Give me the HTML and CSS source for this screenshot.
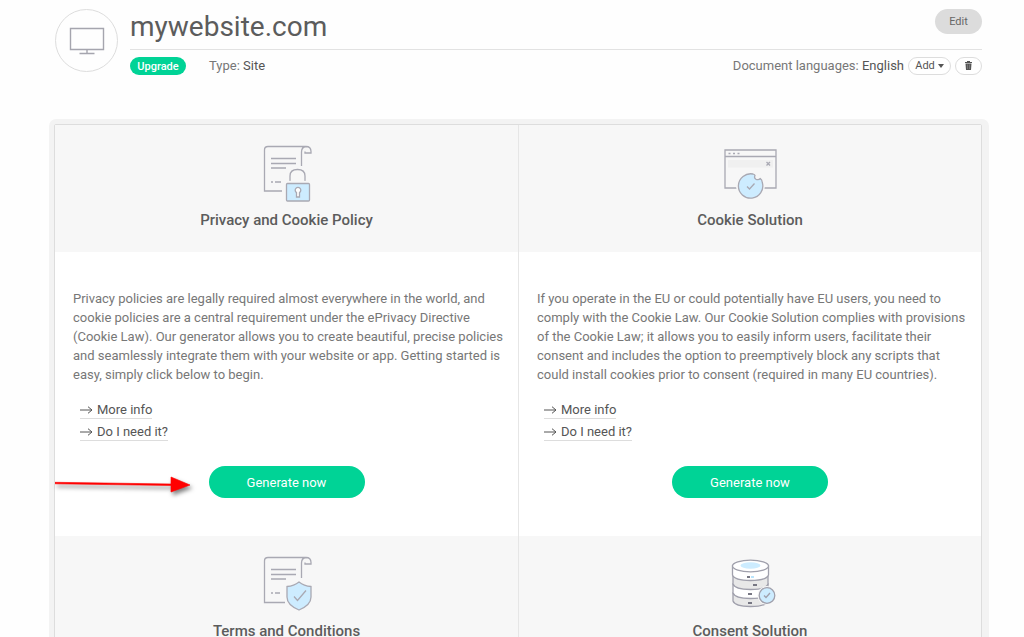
FILE: index.html
```html
<!DOCTYPE html>
<html lang="en">
<head>
<meta charset="utf-8">
<meta name="viewport" content="width=device-width, initial-scale=1">
<title>mywebsite.com</title>
<link rel="stylesheet" href="styles.css">
</head>
<body>
<header class="site-header">
  <div class="site-avatar">
    <svg width="36" height="28" viewBox="0 0 36 28" fill="none" stroke="#a5a5ae" stroke-width="1.4" aria-hidden="true"><path d="M1.5 1.5h33v21h-33zM18 22.500v4M10.500 26.500h15"/></svg>
  </div>
  <div class="site-info">
    <div class="title-row">
      <h1 class="site-title">mywebsite.com</h1>
      <button class="edit-button" type="button">Edit</button>
    </div>
    <div class="meta-row">
      <button class="upgrade-button" type="button">Upgrade</button>
      <span class="meta-type">Type: <span class="meta-value">Site</span></span>
      <div class="languages">
        <span>Document languages: <span class="meta-value">English</span></span>
        <button class="small-button add-button" type="button">Add <span class="caret"></span></button>
        <button class="small-button delete-button" type="button" aria-label="Delete">
          <svg width="7" height="9" viewBox="0 0 7 9" aria-hidden="true"><path fill="#555" d="M0 1h2V0h3v1h2v1H0zM.5 2.600h6L6 9H1z"/><path stroke="#999" stroke-width=".5" d="M2.500 3.500v4.500M4.500 3.500v4.500"/></svg>
        </button>
      </div>
    </div>
  </div>
</header>

<main class="frame">
  <div class="cards">
    <section class="card">
      <div class="card-head">
        <svg class="card-icon" width="60" height="60" viewBox="0 0 60 60" fill="none" stroke="#a9a9b3" stroke-width="1.300" aria-hidden="true">
          <path d="M25 49H7.500V8Q7.500 4.500 11 4.500H49Q54 4.500 54 9.500V11H48V9.500M48 11H50M49 4.500Q44.500 5 44.500 10V24"/>
          <path d="M14 16.500h25M14 21.500h25M14 26h15M14 40h2M18 40h6"/>
          <path d="M33 40V34Q33 27.500 40.500 27.500T48 34v6" stroke="#f7f7f7" stroke-width="4"/>
          <path d="M33 40V34Q33 27.500 40.500 27.500T48 34v6"/>
          <rect x="27.500" y="39.500" width="27" height="21" stroke="#f7f7f7"/>
          <rect x="29.500" y="41.500" width="23" height="17.500" rx="1" fill="#cdecff"/>
          <path fill="#fff" d="M39.500 50.500a2.800 2.800 0 1 1 3 0v4.500h-3z"/>
        </svg>
        <h2 class="card-title">Privacy and Cookie Policy</h2>
      </div>
      <div class="card-body">
        <p class="card-text">Privacy policies are legally required almost everywhere in the world, and<br>cookie policies are a central requirement under the ePrivacy Directive<br>(Cookie Law). Our generator allows you to create beautiful, precise policies<br>and seamlessly integrate them with your website or app. Getting started is<br>easy, simply click below to begin.</p>
        <ul class="card-links">
          <li><a class="card-link" href="#privacy-info"><svg class="link-arrow" width="13" height="8" viewBox="0 0 13 8" aria-hidden="true"><path d="M0 4h12M8 .7 12 4 8 7.300"/></svg>More info</a></li>
          <li><a class="card-link" href="#privacy-need"><svg class="link-arrow" width="13" height="8" viewBox="0 0 13 8" aria-hidden="true"><path d="M0 4h12M8 .7 12 4 8 7.300"/></svg>Do I need it?</a></li>
        </ul>
        <div class="card-action">
          <svg class="pointer-arrow" width="144" height="24" viewBox="0 0 144 24" aria-hidden="true"><path d="M0 8.300 116 10V3L135 11 116 18V11.500L0 9.800z" fill="#f00" stroke="#f00" stroke-width=".6"/></svg>
          <button class="generate-button" type="button">Generate now</button>
        </div>
      </div>
    </section>

    <section class="card">
      <div class="card-head">
        <svg class="card-icon" width="60" height="60" viewBox="0 0 60 60" fill="none" stroke="#a9a9b3" stroke-width="1.300" aria-hidden="true">
          <path d="M5 8h51v38H5zM5 14.500h51"/>
          <path d="M8.500 11.500h2M13 11.500h2M17.500 11.500h2"/>
          <path d="M8 18h45v7.500H8z" fill="#f0f0f0" stroke="none"/>
          <path d="m46.500 20 3.500 3.500m0-3.500-3.500 3.500"/>
          <circle cx="30.500" cy="43.500" r="14.500" fill="#f7f7f7" stroke="none"/>
          <path fill="#cdecff" d="M33 32a12.200 12.200 0 1 0 9.300 8.500q-.3-3-2-4-1.500 1.800-4.300.8-2.200-1.300-1-3.800-.3-1-2-1.500z"/>
          <path d="m27 44.500 2.500 2.500 5-5.500"/>
        </svg>
        <h2 class="card-title">Cookie Solution</h2>
      </div>
      <div class="card-body">
        <p class="card-text">If you operate in the EU or could potentially have EU users, you need to<br>comply with the Cookie Law. Our Cookie Solution complies with provisions<br>of the Cookie Law; it allows you to easily inform users, facilitate their<br>consent and includes the option to preemptively block any scripts that<br>could install cookies prior to consent (required in many EU countries).</p>
        <ul class="card-links">
          <li><a class="card-link" href="#cookie-info"><svg class="link-arrow" width="13" height="8" viewBox="0 0 13 8" aria-hidden="true"><path d="M0 4h12M8 .7 12 4 8 7.300"/></svg>More info</a></li>
          <li><a class="card-link" href="#cookie-need"><svg class="link-arrow" width="13" height="8" viewBox="0 0 13 8" aria-hidden="true"><path d="M0 4h12M8 .7 12 4 8 7.300"/></svg>Do I need it?</a></li>
        </ul>
        <div class="card-action">
          <button class="generate-button" type="button">Generate now</button>
        </div>
      </div>
    </section>

    <section class="card">
      <div class="card-head">
        <svg class="card-icon" width="60" height="60" viewBox="0 0 60 60" fill="none" stroke="#a9a9b3" stroke-width="1.300" aria-hidden="true">
          <path d="M28 49.500H7.500V8Q7.500 4.500 11 4.500H49Q54 4.500 54 9.500V11H48V9.500M49 4.500Q44.500 5 44.500 10V25"/>
          <path d="M14 16.500h25M14 21.500h25M14 26h15M14 40h2M18 40h5"/>
          <path fill="#cdecff" stroke="#f7f7f7" stroke-width="4" d="M42 29q5 4 12 4.500V44Q54 52 42 57 30 52 30 44V33.500Q37 33 42 29z"/>
          <path fill="#cdecff" d="M42 29q5 4 12 4.500V44Q54 52 42 57 30 52 30 44V33.500Q37 33 42 29z"/>
          <path d="m37 43.500 3.500 4 8.500-10"/>
        </svg>
        <h2 class="card-title">Terms and Conditions</h2>
      </div>
    </section>

    <section class="card">
      <div class="card-head">
        <svg class="card-icon" width="60" height="60" viewBox="0 0 60 60" fill="none" stroke="#a0a0ac" stroke-width="1.300" aria-hidden="true">
          <path fill="#e8e8e8" d="M13 40v8q2 5.500 17.500 5.500T48 48v-8z"/>
          <path fill="#fff" d="M13 31v9q2 5.500 17.500 5.500T48 40v-9z"/>
          <path fill="#e8e8e8" d="M13 23v8q2 5.500 17.500 5.500T48 31v-8z"/>
          <path fill="#fff" d="M12.500 13v9q2 5.500 18 5.500T48.500 22v-9z"/>
          <ellipse cx="30.500" cy="13" rx="18" ry="5.800" fill="#fff"/>
          <ellipse cx="30.500" cy="12.500" rx="10" ry="3.300" fill="#cdecff" stroke="none"/>
          <path d="M27 24h3M33 32h4M28 41h4M28 50h4" stroke="#777783" stroke-width="2"/>
          <path d="M31 24h3" stroke="#b9e4fc" stroke-width="2"/>
          <circle cx="47" cy="42.500" r="9.500" fill="#f7f7f7" stroke="none"/>
          <circle cx="47" cy="42.500" r="7.800" fill="#cdecff"/>
          <path d="m44 42.500 2 2 4-4.500"/>
        </svg>
        <h2 class="card-title">Consent Solution</h2>
      </div>
    </section>
  </div>
</main>
</body>
</html>
```
FILE: styles.css
```css
* {
  box-sizing: border-box;
}

body {
  margin: 0;
  height: 100vh;
  overflow: hidden;
  background: #fefefe;
  color: #777;
  font-family: Roboto, "Liberation Sans", sans-serif;
  font-size: 13px;
  line-height: 19px;
}

button {
  border: 0;
  padding: 0;
  font: inherit;
  cursor: pointer;
}

.site-header {
  display: flex;
  gap: 12px;
  margin: 0 42px 0 55px;
  padding-top: 9px;
}

.site-avatar {
  display: flex;
  flex: none;
  align-items: center;
  justify-content: center;
  width: 63px;
  height: 63px;
  border: 1px solid #ddd;
  border-radius: 50%;
}

.site-info {
  flex: 1;
}

.title-row {
  display: flex;
  align-items: flex-start;
  justify-content: space-between;
  height: 41px;
  border-bottom: 1px solid #e2e2e2;
}

.site-title {
  margin: 0;
  color: #5c5c5c;
  font-size: 28px;
  font-weight: 400;
  line-height: 36px;
}

.edit-button {
  width: 47px;
  height: 25px;
  border-radius: 13px;
  background: #dcdcdc;
  color: #666;
  font-size: 11px;
}

.meta-row {
  display: flex;
  align-items: center;
  padding-top: 6px;
}

.meta-type {
  margin-left: 23px;
}

.meta-value {
  color: #555;
}

.upgrade-button {
  width: 56px;
  height: 18px;
  border-radius: 9px;
  background: #00d396;
  color: #fff;
  font-size: 11px;
  font-weight: 500;
}

.languages {
  display: flex;
  align-items: center;
  gap: 4px;
  margin-left: auto;
}

.small-button {
  display: flex;
  align-items: center;
  justify-content: center;
  height: 18px;
  border: 1px solid #ddd;
  border-radius: 9px;
  background: #fff;
  color: #555;
  font-size: 11px;
}

.add-button {
  gap: 3px;
  width: 43px;
}

.delete-button {
  width: 27px;
}

.caret {
  border: 3px solid transparent;
  border-top: 4px solid #555;
  border-bottom: 0;
}

.frame {
  margin: 44px 35px 0 49px;
  padding: 5px 7px 5px 5px;
  border-radius: 7px;
  background: #f3f3f3;
}

.cards {
  display: grid;
  grid-template-columns: repeat(2, minmax(0, 1fr));
  border: 1px solid #ddd;
  border-radius: 2px;
  background: #fff;
}

.card:nth-child(even) {
  border-left: 1px solid #e6e6e6;
}

.card-head {
  display: flex;
  flex-direction: column;
  align-items: center;
  height: 127px;
  padding-top: 17px;
  background: #f7f7f7;
}

.card-icon {
  flex: none;
  overflow: visible;
}

.card-title {
  margin: 0;
  padding-top: 8px;
  color: #5c5c5c;
  font-size: 15px;
  font-weight: 500;
  line-height: 20px;
}

.card-body {
  padding: 37px 18px 38px;
}

.card-text {
  margin: 0;
  white-space: nowrap;
}

.card-links {
  margin: 0;
  padding: 17px 0 0 7px;
  list-style: none;
}

.card-links li {
  display: flex;
  height: 22px;
}

.card-link {
  display: flex;
  align-items: center;
  gap: 4px;
  height: 18px;
  border-bottom: 1px solid #ddd;
  color: #555;
  text-decoration: none;
}

.link-arrow {
  fill: none;
  stroke: #555;
}

.card-action {
  position: relative;
  display: flex;
  justify-content: center;
  padding-top: 21px;
}

.generate-button {
  width: 156px;
  height: 32px;
  border-radius: 16px;
  background: #00d396;
  color: #fff;
}

.pointer-arrow {
  position: absolute;
  left: -18px;
  bottom: 0;
  filter: drop-shadow(2px 3px 2px rgba(0, 0, 0, 0.5));
}
```
